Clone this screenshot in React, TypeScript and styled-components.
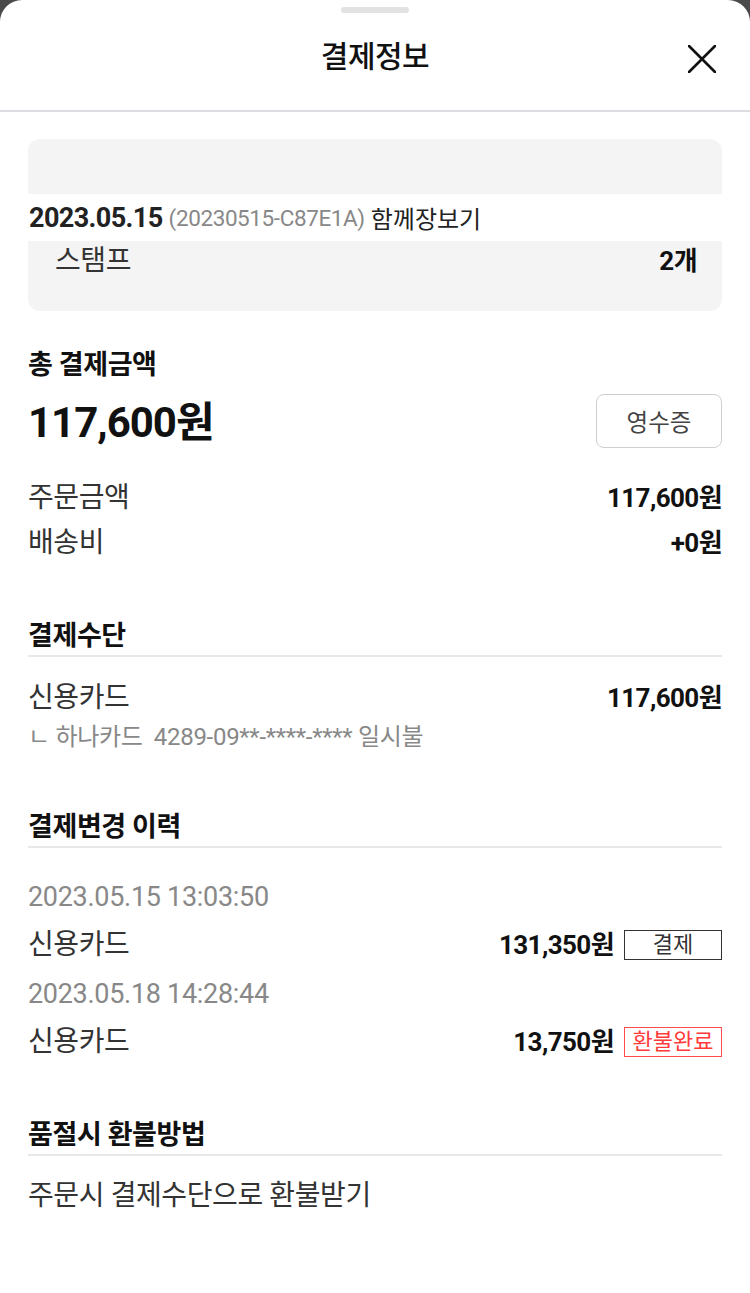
import React from "react";
import styled, { createGlobalStyle } from "styled-components";

const Global = createGlobalStyle`
  html, body { margin: 0; padding: 0; background: #4a4a4a; }
  body { font-family: Roboto, "Noto Sans CJK KR", sans-serif; }
  * { box-sizing: border-box; }
`;

const Sheet = styled.div`
  background: #fff;
  border-radius: 22px 22px 0 0;
  min-height: 1293px;
  display: flex;
  flex-direction: column;
`;

const Header = styled.header`
  display: flex;
  flex-direction: column;
  align-items: center;
  padding-top: 7px;
  padding-bottom: 9px;
  border-bottom: 2px solid #dcdde0;
`;

const Handle = styled.div`
  width: 68px;
  height: 6px;
  border-radius: 3px;
  background: #e2e2e2;
`;

const TitleBar = styled.div`
  width: 100%;
  height: 88px;
  display: grid;
  grid-template-columns: 1fr auto 1fr;
  align-items: center;
  padding: 0 34px;
`;

const Title = styled.h1`
  grid-column: 2;
  margin: 0 0 6px;
  font-size: 30px;
  font-weight: 500;
  color: #111;
  letter-spacing: -0.5px;
`;

const CloseButton = styled.button`
  justify-self: end;
  width: 28px;
  height: 28px;
  padding: 0;
  border: none;
  background: none;
  margin-top: 4px;
  display: flex;
`;

const Content = styled.main`
  padding: 27px 28px 0;
  display: flex;
  flex-direction: column;
`;

const Card = styled.section`
  background: #f4f4f4;
  border-radius: 12px;
  overflow: hidden;
  display: flex;
  flex-direction: column;
`;

const CardSpacer = styled.div`
  height: 55px;
`;

const InfoLine = styled.div`
  background: #fff;
  height: 47px;
  display: flex;
  align-items: center;
  gap: 6px;
  padding-left: 1px;
  white-space: nowrap;
`;

const InfoDate = styled.span`
  font-size: 27px;
  font-weight: 700;
  color: #222;
  letter-spacing: -0.6px;
`;

const InfoId = styled.span`
  font-size: 22.5px;
  color: #888;
  letter-spacing: -0.4px;
`;

const InfoType = styled.span`
  font-size: 24px;
  color: #222;
`;

const StampRow = styled.div`
  display: flex;
  justify-content: space-between;
  align-items: center;
  padding: 2px 25px 32px 27px;
  line-height: 36px;
`;

const Label = styled.span`
  font-size: 28px;
  color: #333;
  letter-spacing: -0.4px;
`;

const DateText = styled.span`
  font-size: 27px;
  color: #888;
  letter-spacing: -0.3px;
`;

const Amount = styled.span`
  font-size: 26px;
  font-weight: 700;
  color: #111;
  letter-spacing: -0.6px;
`;

const Section = styled.section<{ $gap?: number }>`
  display: flex;
  flex-direction: column;
  margin-top: ${(p) => p.$gap ?? 60}px;
`;

const SectionTitle = styled.h2<{ $divider?: boolean }>`
  margin: 0;
  font-size: 27px;
  font-weight: 700;
  color: #111;
  line-height: 30px;
  letter-spacing: -0.4px;
  padding-bottom: ${(p) => (p.$divider ? "4px" : "0")};
  border-bottom: ${(p) => (p.$divider ? "2px solid #e8e8e8" : "none")};
`;

const TotalRow = styled.div`
  display: flex;
  justify-content: space-between;
  align-items: center;
  margin-top: 8px;
`;

const BigAmount = styled.span`
  font-size: 42px;
  font-weight: 700;
  color: #111;
  letter-spacing: -1px;
  margin-bottom: 4px;
`;

const ReceiptButton = styled.button`
  width: 126px;
  height: 54px;
  border: 1.5px solid #cfcfcf;
  border-radius: 8px;
  background: #fff;
  font-family: inherit;
  font-size: 23.5px;
  color: #444;
`;

const Row = styled.div<{ $top?: number }>`
  display: flex;
  justify-content: space-between;
  align-items: center;
  line-height: 36px;
  margin-top: ${(p) => p.$top ?? 0}px;
`;

const Detail = styled.div`
  font-size: 24px;
  color: #888;
  line-height: 30px;
  margin-top: 6px;
  white-space: pre;
  letter-spacing: -0.3px;
`;

const Right = styled.div`
  display: flex;
  align-items: center;
  gap: 10px;
`;

const Badge = styled.span<{ $red?: boolean }>`
  width: 98px;
  height: 30px;
  display: inline-flex;
  align-items: center;
  justify-content: center;
  font-size: 22px;
  line-height: 1;
  border: 1.5px solid ${(p) => (p.$red ? "#ff4b4b" : "#333")};
  color: ${(p) => (p.$red ? "#ff3b3b" : "#333")};
`;

const history = [
  { date: "2023.05.15 13:03:50", amount: "131,350원", badge: "결제", red: false },
  { date: "2023.05.18 14:28:44", amount: "13,750원", badge: "환불완료", red: true },
];

export default function App() {
  return (
    <>
      <Global />
      <Sheet>
        <Header>
          <Handle />
          <TitleBar>
            <Title>결제정보</Title>
            <CloseButton aria-label="닫기">
              <svg width="28" height="28" viewBox="0 0 28 28">
                <path d="M1 1 L27 27 M27 1 L1 27" stroke="#111" strokeWidth="2.6" strokeLinecap="round" />
              </svg>
            </CloseButton>
          </TitleBar>
        </Header>
        <Content>
          <Card>
            <CardSpacer />
            <InfoLine>
              <InfoDate>2023.05.15</InfoDate>
              <InfoId>(20230515-C87E1A)</InfoId>
              <InfoType>함께장보기</InfoType>
            </InfoLine>
            <StampRow>
              <Label>스탬프</Label>
              <Amount>2개</Amount>
            </StampRow>
          </Card>

          <Section $gap={39}>
            <SectionTitle>총 결제금액</SectionTitle>
            <TotalRow>
              <BigAmount>117,600원</BigAmount>
              <ReceiptButton>영수증</ReceiptButton>
            </TotalRow>
            <Row $top={27}>
              <Label>주문금액</Label>
              <Amount>117,600원</Amount>
            </Row>
            <Row $top={9}>
              <Label>배송비</Label>
              <Amount>+0원</Amount>
            </Row>
          </Section>

          <Section>
            <SectionTitle $divider>결제수단</SectionTitle>
            <Row $top={23}>
              <Label>신용카드</Label>
              <Amount>117,600원</Amount>
            </Row>
            <Detail>{"ㄴ 하나카드  4289-09**-****-**** 일시불"}</Detail>
          </Section>

          <Section>
            <SectionTitle $divider>결제변경 이력</SectionTitle>
            {history.map((h, i) => (
              <React.Fragment key={h.date}>
                <Row $top={i === 0 ? 31 : 13}>
                  <DateText>{h.date}</DateText>
                </Row>
                <Row $top={12}>
                  <Label>신용카드</Label>
                  <Right>
                    <Amount>{h.amount}</Amount>
                    <Badge $red={h.red}>{h.badge}</Badge>
                  </Right>
                </Row>
              </React.Fragment>
            ))}
          </Section>

          <Section>
            <SectionTitle $divider>품절시 환불방법</SectionTitle>
            <Row $top={22}>
              <Label>주문시 결제수단으로 환불받기</Label>
            </Row>
          </Section>
        </Content>
      </Sheet>
    </>
  );
}
